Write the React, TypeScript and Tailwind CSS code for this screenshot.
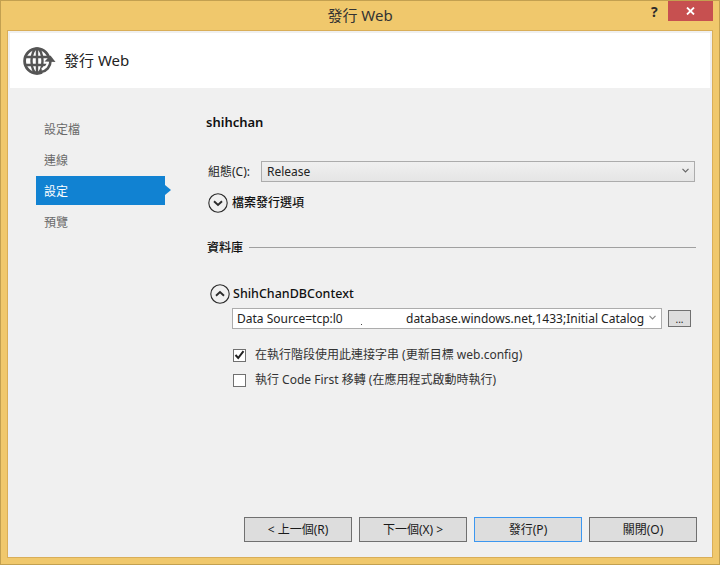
import React from "react";

const font = { fontFamily: '"Noto Sans", "Noto Sans CJK TC", sans-serif' };

function Circle({ up }: { up?: boolean }) {
  return (
    <svg width="20" height="20" viewBox="0 0 20 20" className="shrink-0">
      <circle cx="10" cy="10" r="9.2" fill="none" stroke="#2b2b2b" strokeWidth="1.1" />
      <path d={up ? "M6 11.7 L10 8 L14 11.7" : "M6 8.3 L10 12 L14 8.3"} fill="none" stroke="#2b2b2b" strokeWidth="1.9" />
    </svg>
  );
}

function Chevron({ color = "#666" }: { color?: string }) {
  return (
    <svg width="7" height="5" viewBox="0 0 7 5" className="shrink-0 -mt-[2px]">
      <path d="M0.5 0.8 L3.5 3.8 L6.5 0.8" fill="none" stroke={color} strokeWidth="1.2" />
    </svg>
  );
}

function Btn({ label, focus }: { label: string; focus?: boolean }) {
  return (
    <div className={`w-[108px] h-[25px] flex items-center justify-center border bg-[#dddddd] text-[12px] text-[#1a1a1a] ${focus ? "border-[#3c97f0]" : "border-[#707070]"}`}>
      {label}
    </div>
  );
}

function Nav({ label, active }: { label: string; active?: boolean }) {
  return (
    <div className={`relative h-[29px] w-[129px] pl-2 pt-[2px] flex items-center text-[12px] ${active ? "bg-[#1182d2] text-white" : "text-[#6a6a6a]"}`}>
      {label}
      {active && (
        <span className="absolute left-full top-[9px] w-0 h-0 border-y-[5.5px] border-y-transparent border-l-[6px] border-l-[#1182d2]" />
      )}
    </div>
  );
}

export default function App() {
  return (
    <div style={font} className="w-[720px] h-[565px] flex flex-col bg-[#f0c86c] border border-[#c3a050] overflow-hidden text-[#1a1a1a]">
      <div className="h-[29px] shrink-0 relative flex items-center justify-center text-[15px] text-[#333]">
        <span className="-mt-[1px]">發行 Web</span>
        <span className="absolute left-[650px] top-[3px] text-[14px] leading-[16px] font-bold text-[#2b2b2b]">?</span>
        <div className="absolute right-[6px] top-0 w-[45px] h-[20px] bg-[#c75050] flex items-center justify-center">
          <svg width="9" height="8" viewBox="0 0 9 8">
            <path d="M1 0.5 L8 7.5 M8 0.5 L1 7.5" stroke="#fff" strokeWidth="1.8" />
          </svg>
        </div>
      </div>
      <div className="flex-1 flex flex-col mx-[6px] mb-[6px] border border-[#d9ae58] bg-[#f0f0f0] min-h-0">
        <div className="h-[55px] shrink-0 ml-[2px] mr-[2px] mt-[2px] bg-white flex items-center pl-[13px]">
          <svg width="33" height="30" viewBox="0 0 33 30" className="shrink-0">
            <g fill="none" stroke="#555" strokeWidth="2.4">
              <circle cx="14" cy="15" r="12.4" strokeWidth="2.8" />
              <ellipse cx="14" cy="15" rx="5.5" ry="12.5" />
              <path d="M2 11 H26 M2 19 H26 M14 2 V28" />
            </g>
            <path d="M19 25 A 10 10 0 0 0 27 14" fill="none" stroke="#fff" strokeWidth="6" />
            <path d="M18 26 A 11 11 0 0 0 27.5 15" fill="none" stroke="#555" strokeWidth="2.6" />
            <path d="M21.5 15.5 L27.5 9.5 L32.5 16 Z" fill="#555" />
          </svg>
          <span className="ml-[8px] -mt-px text-[15px] text-[#222]">發行 Web</span>
        </div>
        <div className="flex-1 flex min-h-0">
          <div className="w-[159px] shrink-0 pl-[28px] pt-[26px] flex flex-col gap-[2px]">
            <Nav label="設定檔" />
            <Nav label="連線" />
            <Nav label="設定" active />
            <Nav label="預覽" />
          </div>
          <div className="flex-1 flex flex-col min-w-0 pl-[39px] pr-[17px]">
            <div className="mt-[26px] h-[18px] flex items-center text-[13px] font-semibold text-[#111]">shihchan</div>
            <div className="mt-[29px] flex items-center h-[21px] ml-[1px]">
              <span className="w-[54px] pl-[1px] text-[12px] text-[#222]">組態(C):</span>
              <div className="flex-1 h-[21px] border border-[#acacac] bg-gradient-to-b from-[#f0f0f0] to-[#e5e5e5] flex items-center justify-between pl-[5px] pr-[5px] text-[12px] text-[#222]">
                <span>Release</span>
                <Chevron />
              </div>
            </div>
            <div className="mt-[11px] flex items-center gap-[4px] h-[20px] ml-[2px] text-[12px] font-medium text-[#111]">
              <Circle />
              <span>檔案發行選項</span>
            </div>
            <div className="mt-[26px] flex items-center gap-[6px] h-[18px] ml-[1px]">
              <span className="text-[12px] text-[#111] font-medium">資料庫</span>
              <div className="flex-1 h-px bg-[#a0a0a0] -mr-[1px] -mt-[2px]" />
            </div>
            <div className="mt-[27px] flex items-center gap-[3px] h-[20px] ml-[4px] text-[12.5px] font-medium text-[#111]">
              <Circle up />
              <span>ShihChanDBContext</span>
            </div>
            <div className="mt-[4px] ml-[26px] flex items-center gap-[6px]">
              <div className="relative w-[430px] h-[21px] border border-[#acacac] bg-white flex items-center justify-between pl-[4px] pr-[5px] text-[12px] text-[#222] whitespace-nowrap">
                <span className="flex overflow-hidden">
                  <span className="w-[169px] shrink-0">Data Source=tcp:l0</span>
                  <span>database.windows.net,1433;Initial Catalog</span>
                </span>
                <Chevron color="#888" />
                <span className="absolute left-[128px] top-[15px] w-px h-px bg-[#444]" />
              </div>
              <div className="w-[23px] h-[17px] border border-[#707070] bg-[#dddddd] flex items-center justify-center text-[10px] leading-none text-[#222]">...</div>
            </div>
            <div className="mt-[18px] ml-[27px] flex items-center gap-[9px] h-[16px] text-[12px] text-[#333]">
              <div className="w-[13px] h-[13px] border border-[#707070] bg-white flex items-center justify-center shrink-0">
                <svg width="11" height="10" viewBox="0 0 11 10">
                  <path d="M1.5 5 L4.2 8 L9.5 1.2" fill="none" stroke="#222" strokeWidth="2" />
                </svg>
              </div>
              <span>在執行階段使用此連接字串 (更新目標 web.config)</span>
            </div>
            <div className="mt-[9px] ml-[27px] flex items-center gap-[9px] h-[16px] text-[12px] text-[#333]">
              <div className="w-[13px] h-[13px] border border-[#707070] bg-white shrink-0" />
              <span>執行 Code First 移轉 (在應用程式啟動時執行)</span>
            </div>
            <div className="mt-auto mb-[15px] -mr-[2px] flex justify-end gap-[7px]">
              <Btn label="< 上一個(R)" />
              <Btn label="下一個(X) >" />
              <Btn label="發行(P)" focus />
              <Btn label="關閉(O)" />
            </div>
          </div>
        </div>
      </div>
    </div>
  );
}
